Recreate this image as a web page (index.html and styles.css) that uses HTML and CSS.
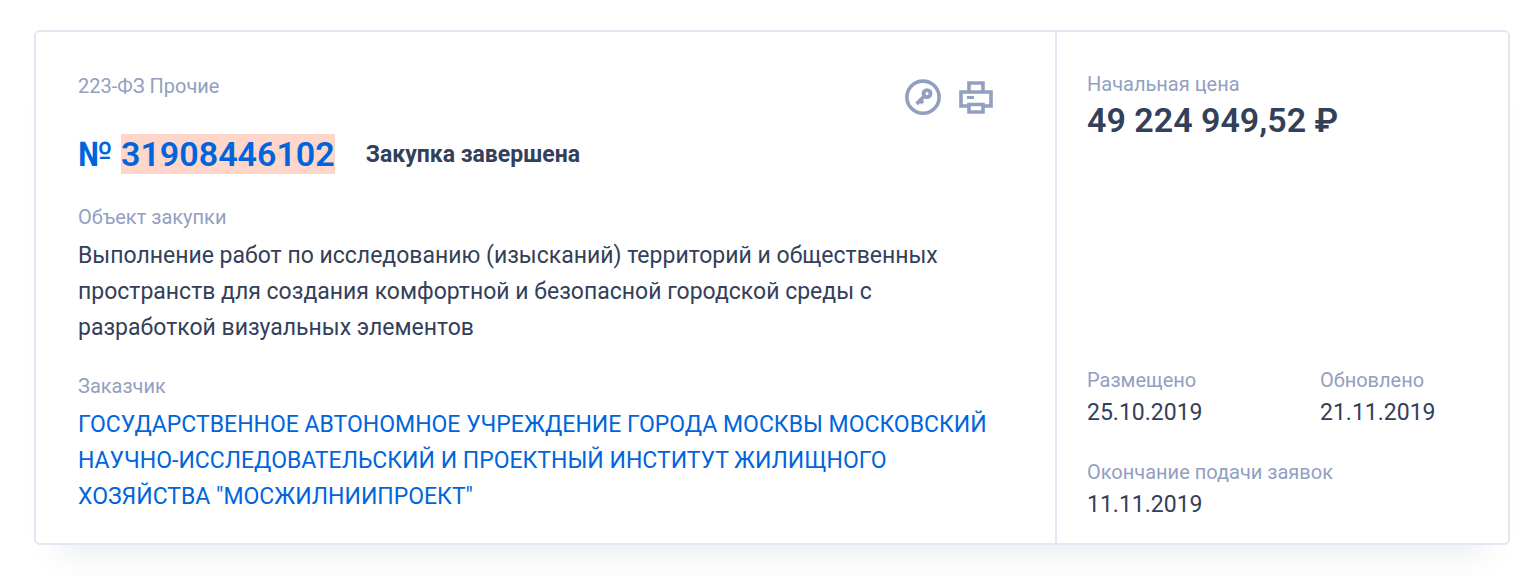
FILE: index.html
```html
<!DOCTYPE html>
<html lang="ru">
<head>
<meta charset="utf-8">
<meta name="viewport" content="width=device-width, initial-scale=1">
<title>Закупка № 31908446102</title>
<link rel="stylesheet" href="styles.css">
</head>
<body>
<article class="card">
  <div class="card-main">
    <header class="card-top">
      <div class="card-law">223-ФЗ Прочие</div>
      <div class="card-actions">
        <button class="icon-button" type="button" aria-label="Электронная подпись">
          <svg width="38" height="38" viewBox="0 0 38 38" fill="none" stroke="currentColor">
            <circle cx="19" cy="19.200" r="16.100" stroke-width="3.600"/>
            <circle cx="23" cy="15.600" r="3.500" stroke-width="3.900"/>
            <path d="M20.500 18L12.600 25.900M16.200 22.300l2.800 2.800" stroke-width="3.800"/>
          </svg>
        </button>
        <button class="icon-button" type="button" aria-label="Печать">
          <svg width="38" height="38" viewBox="0 0 38 38" fill="none" stroke="currentColor" stroke-width="3.600">
            <path d="M13 13.500V5h14v8.500M11.500 28H5V14h30v14h-6.500M13 26.500h14v7.500H13z"/>
            <path d="M11 19.500h7" stroke-width="3"/>
          </svg>
        </button>
      </div>
    </header>
    <div class="card-heading">
      <a class="card-number" href="#">№ <mark class="highlight">31908446102</mark></a>
      <span class="card-status">Закупка завершена</span>
    </div>
    <section class="field">
      <div class="label">Объект закупки</div>
      <div class="field-text">Выполнение работ по исследованию (изысканий) территорий и общественных пространств для создания комфортной и безопасной городской среды с разработкой визуальных элементов</div>
    </section>
    <section class="field">
      <div class="label">Заказчик</div>
      <a class="field-text customer" href="#">ГОСУДАРСТВЕННОЕ АВТОНОМНОЕ УЧРЕЖДЕНИЕ ГОРОДА МОСКВЫ МОСКОВСКИЙ НАУЧНО-ИССЛЕДОВАТЕЛЬСКИЙ И ПРОЕКТНЫЙ ИНСТИТУТ ЖИЛИЩНОГО ХОЗЯЙСТВА "МОСЖИЛНИИПРОЕКТ"</a>
    </section>
  </div>
  <aside class="card-side">
    <div>
      <div class="label">Начальная цена</div>
      <div class="price">49 224 949,52 ₽</div>
    </div>
    <div class="dates">
      <div><div class="label">Размещено</div><div class="date">25.10.2019</div></div>
      <div><div class="label">Обновлено</div><div class="date">21.11.2019</div></div>
      <div class="date-wide"><div class="label">Окончание подачи заявок</div><div class="date">11.11.2019</div></div>
    </div>
  </aside>
</article>
</body>
</html>
```
FILE: styles.css
```css
* { box-sizing: border-box; }

body {
  margin: 0;
  padding: 30px 26px 32px 34px;
  background: #fff;
  color: #334059;
  font-family: Roboto, "Liberation Sans", sans-serif;
  font-weight: 450;
}

a { color: #0065dc; text-decoration: none; }

.card {
  display: grid;
  grid-template-columns: 1019fr 453fr;
  border: 2px solid #e4e7f3;
  border-radius: 6px;
  box-shadow: 0 32px 32px -24px rgba(51, 64, 89, 0.1);
}

.card-main { padding: 42px 42px 28px; }

.card-top {
  display: flex;
  justify-content: space-between;
  align-items: flex-start;
}

.card-law,
.label {
  color: #929fbf;
  font-size: 20px;
  line-height: 24px;
}

.card-actions {
  display: flex;
  gap: 14px;
  padding: 4px 19px 0 0;
}

.icon-button {
  display: block;
  padding: 0;
  border: 0;
  background: none;
  color: #929fbf;
  cursor: pointer;
}

.icon-button svg { display: block; }

.card-heading {
  display: flex;
  align-items: center;
  gap: 31px;
  margin-top: 16px;
}

.card-number {
  font-size: 34px;
  font-weight: 600;
  line-height: 44px;
}

.highlight { background: #fed6ca; color: inherit; }

.card-status {
  font-size: 23px;
  font-weight: 700;
}

.field { margin-top: 28px; }

.card-heading + .field { margin-top: 29px; }

.field-text {
  display: block;
  margin-top: 9px;
  font-size: 23px;
  line-height: 36px;
}

.card-side {
  display: flex;
  flex-direction: column;
  justify-content: space-between;
  padding: 40px 30px 22px;
  border-left: 2px solid #e4e7f3;
}

.price {
  margin-top: 2px;
  font-size: 34px;
  font-weight: 600;
  line-height: 44px;
}

.dates {
  display: grid;
  grid-template-columns: 233fr 158fr;
  row-gap: 31px;
}

.date-wide { grid-column: 1 / -1; }

.date {
  margin-top: 5px;
  font-size: 23px;
  line-height: 32px;
}
```
